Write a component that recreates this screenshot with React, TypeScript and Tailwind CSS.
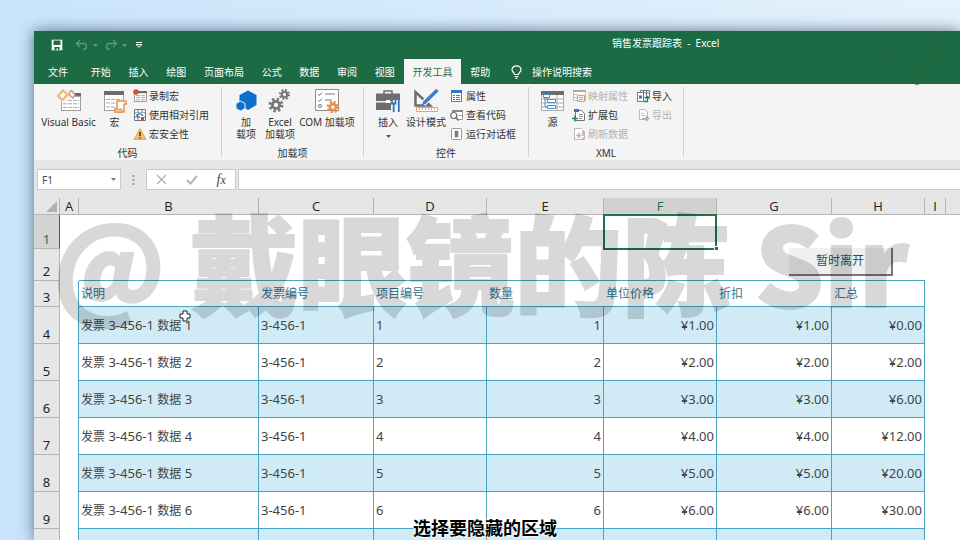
import React from "react";

type IconProps = { className?: string };

const SheetGrid = ({ x = 0, y = 0, w = 20, h = 16, head = "#6d6d6d" }: { x?: number; y?: number; w?: number; h?: number; head?: string }) => (
  <g>
    <rect x={x + 0.5} y={y + 0.5} width={w - 1} height={h - 1} fill="#fff" stroke="#a0a0a0" />
    <rect x={x} y={y} width={w} height={h / 5} fill={head} />
    <path
      d={`M${x + 2} ${y + h * 0.42}h${w - 4}M${x + 2} ${y + h * 0.6}h${w - 4}M${x + 2} ${y + h * 0.8}h${w - 4}`}
      stroke="#a8a8a8"
      strokeDasharray="4 1"
    />
  </g>
);

const VisualBasicIcon = ({ className }: IconProps) => (
  <svg className={className} width="26" height="24" viewBox="0 0 26 24" fill="none">
    <SheetGrid x={5} y={4} w={20} h={18} />
    <path d="M0 3h19v5l-5 2-6 4-8-5z" fill="#f4f4f4" />
    <path d="M2 7 7 1.500l4.500 4L6.500 11z" fill="#fff" stroke="#edb765" strokeWidth="2.200" />
    <path d="M13.500 3l2-1.500 3.500 4.500-2 3-3.500-3z" fill="#fff" stroke="#e08a8a" strokeWidth="1.500" />
  </svg>
);

const MacroIcon = ({ className }: IconProps) => (
  <svg className={className} width="26" height="24" viewBox="0 0 26 24" fill="none">
    <SheetGrid x={2} y={2} w={20} h={20} />
    <path d="M15 12h9v3h-2v8h-9v-3h2z" fill="#fff" stroke="#e8924a" strokeWidth="1.500" />
    <path d="M13 20h7v3h-7z" fill="#f6c9a0" stroke="#e8924a" />
  </svg>
);

const RecordIcon = ({ className }: IconProps) => (
  <svg className={className} width="14" height="14" viewBox="0 0 14 14" fill="none">
    <SheetGrid x={1} y={2} w={13} h={11} />
    <circle cx="3" cy="3" r="2.800" fill="#d8501d" />
  </svg>
);

const RelativeIcon = ({ className }: IconProps) => (
  <svg className={className} width="14" height="14" viewBox="0 0 14 14" fill="none">
    <path d="M1.500 1.500h11v11h-11zM1.500 5h11M1.500 9h11M5 1.500v11M9 1.500v11" fill="#fff" stroke="#777" />
    <rect x="3" y="5" width="8" height="5" fill="#fff" />
    <path d="M4 9c0-4 5-4 6-1M4 6v3h3" stroke="#2f77c0" strokeWidth="1.300" />
    <rect x="8" y="9" width="3" height="3" fill="#d8501d" />
  </svg>
);

const WarningIcon = ({ className }: IconProps) => (
  <svg className={className} width="14" height="14" viewBox="0 0 14 14" fill="none">
    <path d="M7 1.500 13 12.500H1z" fill="#f0bd73" stroke="#e6a84f" strokeLinejoin="round" />
    <path d="M7 5v4M7 10.200v1.400" stroke="#333" strokeWidth="1.500" />
  </svg>
);

const HexIcon = ({ className }: IconProps) => (
  <svg className={className} width="26" height="24" viewBox="0 0 26 24" fill="#0c6fd0">
    <path d="M15 1.500 23.500 6v10L15 21 6.500 16V6z" />
    <path d="M7.500 12 12 14.500v5L7.500 22 3 19.500v-5z" stroke="#f3f3f3" />
  </svg>
);

const Gear = ({ cx, cy, r, color }: { cx: number; cy: number; r: number; color: string }) => (
  <g>
    <circle cx={cx} cy={cy} r={r * 0.85} stroke={color} strokeWidth={r * 0.42} strokeDasharray={`${r * 0.334} ${r * 0.334}`} fill="none" />
    <circle cx={cx} cy={cy} r={r * 0.52} stroke={color} strokeWidth={r * 0.42} fill="#f5f5f5" />
  </g>
);

const GearsIcon = ({ className }: IconProps) => (
  <svg className={className} width="26" height="24" viewBox="0 0 26 24">
    <Gear cx={9} cy={16} r={7} color="#777" />
    <Gear cx={17.500} cy={5.500} r={5.300} color="#777" />
  </svg>
);

const ComIcon = ({ className }: IconProps) => (
  <svg className={className} width="26" height="24" viewBox="0 0 26 24" fill="none">
    <path d="M1.500 .5h23v21h-23z" fill="#fff" stroke="#8b8b8b" />
    <path d="M4 5l1.500 1.500L8 3.500M4 11l1.500 1.500L8 9.500M11 5h10M11 11h7" stroke="#777" />
    <circle cx="6" cy="17" r="1.500" stroke="#777" />
    <Gear cx={19} cy={18} r={6} color="#e98f45" />
  </svg>
);

const ToolboxIcon = ({ className }: IconProps) => (
  <svg className={className} width="26" height="24" viewBox="0 0 26 24" fill="none">
    <path d="M9 5V2h8v3" stroke="#6d6d6d" strokeWidth="1.500" />
    <path d="M1 4.500h24V12H1zM1 13.500h24V21H1z" fill="#6d6d6d" />
    <path d="M11 11h4v3h-4z" fill="#fff" />
    <path d="M16 11h10v13H16z" fill="#f3f3f3" />
    <path d="M17 11v3.500h3.500V11M18.700 14v9M23.800 11v5M23.800 16v7" stroke="#2f77c0" strokeWidth="1.800" />
  </svg>
);

const DesignIcon = ({ className }: IconProps) => (
  <svg className={className} width="26" height="24" viewBox="0 0 26 24" fill="none">
    <path d="M2.500 3v13.500H17z" stroke="#6d6d6d" strokeWidth="2.500" />
    <path d="M23 1.500 10 15" stroke="#f3f3f3" strokeWidth="6" />
    <path d="M24.500 1 11 14" stroke="#3f7fc4" strokeWidth="3.500" />
    <path d="M11 12l-3 5 5-2.500z" fill="#3f7fc4" />
    <path d="M3.500 18.500h21v4h-21z" fill="#fff" stroke="#e9a468" />
    <path d="M6.500 19v2M9.500 19v2M12.500 19v2M15.500 19v2M18.500 19v2M21.500 19v2" stroke="#e9a468" />
  </svg>
);

const PropertyIcon = ({ className }: IconProps) => (
  <svg className={className} width="14" height="14" viewBox="0 0 14 14" fill="none">
    <path d="M1.500 1.500h10v11h-10z" fill="#fff" stroke="#777" />
    <path d="M1 1h11v3H1z" fill="#2f77c0" />
    <path d="M3 6.500h2M3 8.500h2M3 10.500h2" stroke="#2f77c0" />
    <path d="M6 6.500h4M6 8.500h4M6 10.500h4" stroke="#777" />
  </svg>
);

const ViewCodeIcon = ({ className }: IconProps) => (
  <svg className={className} width="14" height="14" viewBox="0 0 14 14" fill="none">
    <path d="M2.500 2.500h10v9h-10z" fill="#fff" stroke="#999" />
    <path d="M2 2h11v2H2z" fill="#888" />
    <path d="M9 7.500h3" stroke="#999" />
    <path d="M0 4h8l1 4-1 5H0z" fill="#f4f4f4" />
    <circle cx="3.800" cy="7.500" r="3" fill="#fff" stroke="#666" strokeWidth="1.200" />
    <path d="M6 9.700 8.500 12.500" stroke="#666" strokeWidth="1.500" />
  </svg>
);

const DialogIcon = ({ className }: IconProps) => (
  <svg className={className} width="14" height="14" viewBox="0 0 14 14" fill="none">
    <rect x="1.500" y="1.500" width="10" height="11" rx="1" fill="#fff" stroke="#999" />
    <path d="M4.500 3.500h4v7h-4z" fill="#aaa" />
    <path d="M5 5h3M5 7h3M5 9h3" stroke="#555" />
  </svg>
);

const SourceIcon = ({ className }: IconProps) => (
  <svg className={className} width="26" height="24" viewBox="0 0 26 24" fill="none">
    <path d="M1.500 2.500h22v19h-22zM1.500 10h22M1.500 14h22M1.500 18h22M17 2.500v19" fill="#fff" stroke="#aaa" />
    <path d="M1 2h23v4H1z" fill="#6d6d6d" />
    <path d="M5 5v13M5 10h3M5 18h5" stroke="#4a8fc9" />
    <path d="M3.500 5.500h6v3h-6zM7.500 10.500h8v3h-8zM7.500 16.500h8v3h-8z" fill="#fff" stroke="#4a8fc9" />
  </svg>
);

const MapPropsIcon = ({ className }: IconProps) => (
  <svg className={className} width="14" height="14" viewBox="0 0 14 14" fill="none">
    <path d="M1.500 1.500h12v10h-12z" fill="#fff" stroke="#bbb" />
    <path d="M1 1h13v2H1z" fill="#aaa" />
    <path d="M2 5.500h4M2 8.500h3" stroke="#e5b79a" />
    <path d="M5.500 6.500h7v6h-7z" fill="#f6eeea" stroke="#b8a8a0" />
    <path d="M7 8.500h4M7 10.500h4" stroke="#d9a78a" />
  </svg>
);

const ExpansionIcon = ({ className }: IconProps) => (
  <svg className={className} width="14" height="14" viewBox="0 0 14 14" fill="none">
    <path d="M3.500 2.500h6l3 3v7h-9z" fill="#fff" stroke="#777" />
    <path d="M7 6.500h4M7 8.500h4M7 10.500h3" stroke="#999" />
    <path d="M2 2.500h5" stroke="#2f77c0" strokeWidth="3" />
    <path d="M3 7.500v6M0 10.500h6" stroke="#1f8a5b" strokeWidth="1.500" />
  </svg>
);

const RefreshDataIcon = ({ className }: IconProps) => (
  <svg className={className} width="14" height="14" viewBox="0 0 14 14" fill="none">
    <path d="M2.500 1.500h7l3 3v8h-10z" fill="#fff" stroke="#bbb" />
    <path d="M4 8.500h4M6 6l2.500 2.500L6 11" stroke="#dba9a0" strokeWidth="1.300" />
    <path d="M11 4v5M11 10.500v1.500" stroke="#aaa" strokeWidth="1.500" />
  </svg>
);

const ImportIcon = ({ className }: IconProps) => (
  <svg className={className} width="14" height="14" viewBox="0 0 14 14" fill="none">
    <path d="M4.500 1.500h9v7h-9zM4.500 4h9M7.500 1.500v7M10.500 1.500v7" fill="#fff" stroke="#777" />
    <path d="M1.500 3.500h6v9h-6z" fill="#fff" stroke="#777" />
    <path d="M3 6.500h3v3H3z" fill="#2f77c0" />
    <path d="M8 12.500h3.500V8M9.500 9.500l2-2 2 2" stroke="#1f8a5b" strokeWidth="1.300" />
  </svg>
);

const ExportIcon = ({ className }: IconProps) => (
  <svg className={className} width="14" height="14" viewBox="0 0 14 14" fill="none">
    <path d="M3.500 1.500h5l3 3v7h-8z" fill="#fff" stroke="#bbb" />
    <path d="M5 5.500h3M5 7.500h4" stroke="#e0b0a8" />
    <path d="M6 10.500h6M10 8l2.500 2.500L10 13" stroke="#aaa" strokeWidth="1.400" />
  </svg>
);

const Undo = ({ className }: IconProps) => (
  <svg className={className} width="14" height="12" viewBox="0 0 14 12" fill="none" stroke="#5d9a7b" strokeWidth="1.300">
    <path d="M5 1 1.500 4.500 5 8M2 4.500h6.500c4 0 4 6 0 6H8" />
  </svg>
);

const Caret = ({ className }: IconProps) => (
  <svg className={className} width="5" height="3" viewBox="0 0 5 3" fill="currentColor">
    <path d="M0 0h5L2.500 3z" />
  </svg>
);

const tabs = ["开始", "插入", "绘图", "页面布局", "公式", "数据", "审阅", "视图", "开发工具", "帮助"];

function TitleBar() {
  return (
    <div className="flex h-7 items-center text-white">
      <div className="flex w-[578px] shrink-0 items-center pl-[17px]">
        <button aria-label="保存">
          <svg width="12" height="12" viewBox="0 0 12 12" fill="none">
            <path d="M.7.7h10.600v10.600H.7z" fill="#fff" />
            <path d="M2.500 1.500h7v4.500h-7z" fill="#1d6b44" />
            <path d="M3.500 8h5v3.300h-5z" fill="#1d6b44" />
            <path d="M5.500 9.500h1.500v1.800H5.500z" fill="#fff" />
          </svg>
        </button>
        <button aria-label="撤消" className="ml-3 flex items-center gap-1">
          <Undo />
          <Caret className="text-[#5d9a7b]" />
        </button>
        <button aria-label="恢复" className="ml-1.5 flex items-center gap-1">
          <Undo className="-scale-x-100" />
          <Caret className="text-[#5d9a7b]" />
        </button>
        <button aria-label="自定义快速访问工具栏" className="ml-2">
          <svg width="8" height="6" viewBox="0 0 8 6" fill="none" stroke="#fff">
            <path d="M1 .5h6M1 2.500h6L4 5.300z" />
          </svg>
        </button>
      </div>
      <h1 className="whitespace-pre pb-1">销售发票跟踪表  -  Excel</h1>
      <svg className="ml-[170px] mt-2 h-7 w-16 shrink-0 overflow-visible" viewBox="0 0 64 28" fill="none" stroke="#3a6033">
        <path d="M2 12l3-1 3 5-3 8-3-5zM54 2 24 48l5 2L54 2" strokeDasharray="3 1" />
      </svg>
    </div>
  );
}

function Tabs() {
  return (
    <nav className="flex h-[25px] text-white">
      <button className="w-12 shrink-0">文件</button>
      <div className="flex w-[417px] shrink-0">
        {tabs.map((t) => (
          <button key={t} className={t === "开发工具" ? "grow bg-[#f5f5f5] px-2 text-[#2a7150]" : "grow px-2"}>
            {t}
          </button>
        ))}
      </div>
      <button className="ml-3 flex items-center gap-2.5">
        <svg width="11" height="14" viewBox="0 0 11 14" fill="none" stroke="#fff" strokeWidth="1.200">
          <path d="M3.500 9.500C3.500 7.500 1 7 1 4.800 1 2.500 3 .8 5.500.8S10 2.500 10 4.800c0 2.200-2.500 2.700-2.500 4.700zM3.500 11.500h4M4.500 13.200h2" />
        </svg>
        操作说明搜索
      </button>
    </nav>
  );
}

function Big({ icon, label, width, caret }: { icon: React.ReactNode; label: React.ReactNode; width: string; caret?: boolean }) {
  return (
    <button className={`flex shrink-0 flex-col items-center gap-[3px] whitespace-nowrap pt-[5px] leading-3 ${width}`}>
      {icon}
      <span>{label}</span>
      {caret && <Caret className="mt-1 text-[#555]" />}
    </button>
  );
}

function Small({ icon, label, off }: { icon: React.ReactNode; label: string; off?: boolean }) {
  return (
    <button disabled={off} className={`flex h-[19px] items-center gap-0.5 whitespace-nowrap ${off ? "text-[#b3b3b3]" : ""}`}>
      {icon}
      {label}
    </button>
  );
}

function Group({ name, width, children }: { name: string; width: string; children: React.ReactNode }) {
  return (
    <section className={`flex shrink-0 py-[3px] ${width}`}>
      <div className="-mt-[3px] flex grow flex-col justify-between">
        <div className="flex pl-[7px]">{children}</div>
        <h2 className="-mb-0.5 text-center leading-3">{name}</h2>
      </div>
      <span className="w-px bg-[#d0d0d0]" />
    </section>
  );
}

function Ribbon() {
  return (
    <div className="flex h-[76px] bg-[#f4f4f4] text-[#333]">
      <Group name="代码" width="w-[188px]">
        <Big icon={<VisualBasicIcon />} label="Visual Basic" width="w-[55px]" />
        <Big icon={<MacroIcon />} label="宏" width="w-[37px]" />
        <div className="pt-0.5">
          <Small icon={<RecordIcon />} label="录制宏" />
          <Small icon={<RelativeIcon />} label="使用相对引用" />
          <Small icon={<WarningIcon />} label="宏安全性" />
        </div>
      </Group>
      <Group name="加载项" width="w-[142px]">
        <Big icon={<HexIcon />} label={<>加<br />载项</>} width="w-[34px]" />
        <Big icon={<GearsIcon />} label={<>Excel<br />加载项</>} width="w-[34px]" />
        <Big icon={<ComIcon />} label="COM 加载项" width="w-[60px]" />
      </Group>
      <Group name="控件" width="w-[165px]">
        <Big icon={<ToolboxIcon />} label="插入" width="w-[34px]" caret />
        <Big icon={<DesignIcon />} label="设计模式" width="w-[42px]" />
        <div className="pl-[3px] pt-0.5">
          <Small icon={<PropertyIcon />} label="属性" />
          <Small icon={<ViewCodeIcon />} label="查看代码" />
          <Small icon={<DialogIcon />} label="运行对话框" />
        </div>
      </Group>
      <Group name="XML" width="w-[155px]">
        <Big icon={<SourceIcon />} label="源" width="w-[33px]" />
        <div className="w-[67px] pl-[3px] pt-0.5">
          <Small icon={<MapPropsIcon />} label="映射属性" off />
          <Small icon={<ExpansionIcon />} label="扩展包" />
          <Small icon={<RefreshDataIcon />} label="刷新数据" off />
        </div>
        <div className="pt-0.5">
          <Small icon={<ImportIcon />} label="导入" />
          <Small icon={<ExportIcon />} label="导出" off />
        </div>
      </Group>
    </div>
  );
}

function FormulaBar() {
  return (
    <div className="flex h-[38px] items-start bg-[#e6e6e6] pl-[3px] pt-[9px]">
      <div className="flex h-[21px] w-[84px] shrink-0 items-center border border-[#c9c9c9] bg-white pr-1">
        <input aria-label="名称框" defaultValue="F1" className="w-full min-w-0 pl-1 text-[#444] outline-none" />
        <button aria-label="展开名称框">
          <Caret className="text-[#777]" />
        </button>
      </div>
      <svg className="mx-[11px] h-[21px] w-[3px] shrink-0" viewBox="0 0 3 21" fill="#999">
        <path d="M.5 6h2v2h-2zM.5 10h2v2h-2zM.5 14h2v2h-2z" />
      </svg>
      <div className="flex h-[21px] w-[90px] shrink-0 items-center justify-around border border-[#c9c9c9] bg-white">
        <button aria-label="取消">
          <svg width="11" height="11" viewBox="0 0 11 11" stroke="#b5b5b5" strokeWidth="1.500">
            <path d="M1 1l9 9M10 1 1 10" />
          </svg>
        </button>
        <button aria-label="输入">
          <svg width="12" height="10" viewBox="0 0 12 10" fill="none" stroke="#b5b5b5" strokeWidth="2">
            <path d="M1 5l3.500 3.500L11 1" />
          </svg>
        </button>
        <button className="font-['Liberation_Serif',serif] text-sm italic leading-4 text-[#444]">
          f<span className="text-xs">x</span>
        </button>
      </div>
      <input aria-label="编辑栏" className="ml-0.5 h-[21px] min-w-0 grow border border-r-0 border-[#c9c9c9] bg-white outline-none" />
    </div>
  );
}

const letters = ["A", "B", "C", "D", "E", "F", "G", "H", "I"];
const headings = ["说明", "发票编号", "项目编号", "数量", "单位价格", "折扣", "汇总"];
const totals = ["¥0.00", "¥2.00", "¥6.00", "¥12.00", "¥20.00", "¥30.00"];

function RowHead({ n }: { n?: number }) {
  return (
    <th
      scope="row"
      className={`border-b border-r pb-px text-center align-bottom text-[13px] font-normal leading-4 ${
        n === 1 ? "border-b-[#b5b5b5] border-r-[#217346] bg-[#d3d3d3] text-[#1e6e46]" : "border-[#b5b5b5] bg-[#e6e6e6] text-[#222]"
      }`}
    >
      {n}
    </th>
  );
}

const lines = "border-b border-r border-[#4aa3c4]";

function Sheet() {
  return (
    <div className="relative">
      <table className="w-full table-fixed border-separate border-spacing-0">
        <colgroup>
          <col className="w-[26px]" />
          <col className="w-[19px]" />
          <col className="w-[180px]" />
          <col className="w-[115px]" />
          <col className="w-[113px]" />
          <col className="w-[117px]" />
          <col className="w-[113px]" />
          <col className="w-[115px]" />
          <col className="w-[93px]" />
          <col className="w-[21px]" />
          <col />
        </colgroup>
        <thead>
          <tr className="h-[17px] bg-[#e6e6e6] font-['Open_Sans',sans-serif] text-[13px] leading-4 text-[#222]">
            <td className="border-b border-r border-[#b5b5b5]">
              <svg className="ml-auto mr-0.5" width="11" height="11" viewBox="0 0 11 11" fill="#b3b3b3">
                <path d="M11 0v11H0z" />
              </svg>
            </td>
            {letters.map((l) => (
              <th
                key={l}
                scope="col"
                className={`border-b border-r border-[#b5b5b5] font-normal ${l === "F" ? "bg-[#d1d1d1] text-[#1e6e46]" : ""}`}
              >
                {l}
              </th>
            ))}
            <td className="border-b border-[#b5b5b5]" />
          </tr>
        </thead>
        <tbody>
          <tr className="h-[34px]">
            <RowHead n={1} />
            <td colSpan={5} />
            <td className="relative">
              <span className="absolute -bottom-px -left-px right-0 -top-px border-2 border-[#217346]" />
              <span className="absolute -bottom-0.5 -right-0.5 size-[5px] border border-white bg-[#217346]" />
            </td>
            <td colSpan={4} />
          </tr>
          <tr className="h-8">
            <RowHead n={2} />
            <td />
            <td colSpan={7} className="border-b border-[#4aa3c4]" />
            <td colSpan={2} />
          </tr>
          <tr className="h-[26px] text-left text-xs text-[#2f7490]">
            <RowHead n={3} />
            <td className="border-r border-[#4aa3c4]" />
            {headings.map((h) => (
              <th
                key={h}
                scope="col"
                className={`border-b border-[#4aa3c4] pl-0.5 font-normal leading-4 ${h === "汇总" ? "border-r" : ""}`}
              >
                {h}
              </th>
            ))}
            <td colSpan={2} />
          </tr>
          {totals.map((total, i) => (
            <tr key={total} className="h-[37px] text-[13px] leading-4 text-[#444]">
              <RowHead n={i + 4} />
              <td className="border-r border-[#4aa3c4]" />
              {[
                <>
                  <span className="text-xs">发票</span> 3-456-1 <span className="text-xs">数据</span> {i + 1}
                </>,
                "3-456-1",
                i + 1,
                i + 1,
                `¥${i + 1}.00`,
                `¥${i + 1}.00`,
                total,
              ].map((v, c) => (
                <td key={c} className={`${lines} px-0.5 ${c > 2 ? "text-right" : ""} ${i % 2 === 0 ? "bg-[#d1ebf6]" : ""}`}>
                  {v}
                </td>
              ))}
              <td colSpan={2} />
            </tr>
          ))}
          <tr className="h-[37px]">
            <RowHead />
            <td className="border-r border-[#4aa3c4]" />
            {headings.map((h) => (
              <td key={h} className={`${lines} bg-[#d1ebf6]`} />
            ))}
            <td colSpan={2} />
          </tr>
        </tbody>
      </table>
      <button className="absolute left-[755px] top-[50px] h-7 w-[104px] border-b-2 border-r-2 border-[#777] bg-[#f0f0f0] text-xs text-[#1f5468]">
        暂时离开
      </button>
      <svg className="absolute left-[145px] top-[112px]" width="12" height="12" viewBox="0 0 12 12">
        <path d="M4 1h4v3h3v4H8v3H4V8H1V4h3z" fill="#fff" stroke="#222" />
      </svg>
    </div>
  );
}

export default function App() {
  return (
    <div className="relative h-screen overflow-hidden bg-linear-to-r from-[#c9e4fb] to-[#e4f2fb] pl-[34px] pt-[31px] font-['Noto_Sans','Noto_Sans_CJK_SC',sans-serif] text-[10px] leading-4">
      <main className="h-full bg-white shadow-[0_0_14px_rgba(50,70,95,0.75)]">
        <header className="bg-[#1d6b44]">
          <TitleBar />
          <Tabs />
        </header>
        <Ribbon />
        <FormulaBar />
        <Sheet />
      </main>
      <div className="pointer-events-none absolute left-[53px] top-[206px] whitespace-nowrap font-['Noto_Sans_CJK_SC',sans-serif] text-[108px] font-black leading-[108px] text-black opacity-15 [-webkit-text-stroke:2px_#000]">
        @ 戴眼镜的陈 Sir
      </div>
      <p className="absolute inset-x-0 bottom-0 pl-2.5 text-center text-[18px] font-bold leading-6 text-black [text-shadow:0_0_2px_#fff,0_0_2px_#fff,0_0_3px_#fff]">
        选择要隐藏的区域
      </p>
    </div>
  );
}
